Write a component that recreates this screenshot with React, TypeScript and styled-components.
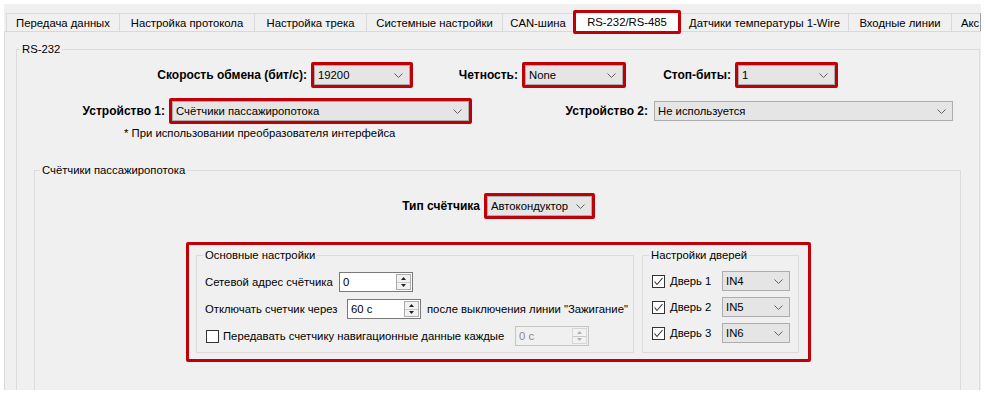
import React from "react";
import styled, { createGlobalStyle } from "styled-components";

const GlobalStyle = createGlobalStyle`
  html, body { margin: 0; padding: 0; background: #ffffff; }
  body { font-family: "Liberation Sans", Arial, sans-serif; font-size: 11.3px; color: #000; }
  * { box-sizing: border-box; }
`;

const RED = "#bf0008";
const FS = "11.3px";

const Page = styled.div`
  width: 987px;
  height: 394px;
  padding: 4px 6px 4px 4px;
  background: #fff;
`;

const Frame = styled.div`
  width: 977px;
  height: 386px;
  background: #f0f0f0;
  overflow: hidden;
  display: flex;
  flex-direction: column;
`;

const TabBar = styled.div`
  height: 27px;
  flex: none;
  display: flex;
  align-items: flex-end;
  padding-left: 2px;
  white-space: nowrap;
`;

const Tab = styled.div<{ $w: number }>`
  flex: none;
  width: ${(p) => p.$w}px;
  height: 18px;
  margin-left: -1px;
  border: 1px solid #d9d9d9;
  border-bottom: none;
  display: flex;
  align-items: center;
  justify-content: center;
  font-size: ${FS};
  overflow: hidden;
  &:first-child { margin-left: 0; }
`;

const ActiveTab = styled.div<{ $w: number }>`
  flex: none;
  position: relative;
  z-index: 1;
  width: ${(p) => p.$w}px;
  height: 24px;
  margin: 0 0 -3px -1px;
  border: 3px solid ${RED};
  border-radius: 2px;
  background: #fff;
  display: flex;
  align-items: center;
  justify-content: center;
  font-size: ${FS};
`;

const CutTab = styled(Tab)`
  justify-content: flex-start;
  padding-left: 9px;
  border-right-color: #a0a0a0;
`;

const Panel = styled.div`
  flex: 1;
  border-top: 1px solid #d9d9d9;
  border-left: 1px solid #d9d9d9;
  padding: 10px 0 0 11px;
`;

const Group = styled.fieldset<{ $w: number }>`
  margin: 0;
  padding: 0;
  min-width: 0;
  width: ${(p) => p.$w}px;
  border: 1px solid #dcdcdc;
`;

const OuterGroup = styled(Group)`
  height: 420px;
`;

const InnerGroup = styled(Group)`
  margin: 23px 0 0 17px;
  height: 300px;
`;

const SubGroup = styled(Group)`
  padding: 0 8px 6px 8px;
`;

const Legend = styled.legend<{ $ml: number }>`
  padding: 0 2px;
  margin-left: ${(p) => p.$ml}px;
  line-height: 14px;
  font-size: ${FS};
`;

const Row = styled.div<{ $mt?: number; $pl?: number }>`
  display: flex;
  align-items: center;
  margin-top: ${(p) => p.$mt ?? 0}px;
  padding-left: ${(p) => p.$pl ?? 0}px;
  white-space: nowrap;
`;

const FieldLabel = styled.div<{ $w: number; $pr?: number }>`
  flex: none;
  width: ${(p) => p.$w}px;
  padding-right: ${(p) => p.$pr ?? 4}px;
  text-align: right;
  font-weight: bold;
  font-size: 12px;
`;

const PlainLabel = styled.div<{ $w?: number; $ml?: number; $pl?: number }>`
  flex: none;
  ${(p) => (p.$w ? `width: ${p.$w}px;` : "")}
  margin-left: ${(p) => p.$ml ?? 0}px;
  padding-left: ${(p) => p.$pl ?? 0}px;
  font-size: ${FS};
  white-space: nowrap;
  overflow: hidden;
`;

const Note = styled.div`
  margin-top: 2px;
  padding-left: 107px;
  line-height: 14px;
  font-size: ${FS};
`;

const Highlight = styled.div`
  flex: none;
  display: flex;
  border: 3px solid ${RED};
  border-radius: 2px;
`;

const BigHighlight = styled(Highlight)`
  margin: 23px 0 0 151px;
  width: 625px;
  padding: 3px 9px 6px 7px;
  gap: 8px;
  align-items: stretch;
`;

const ComboBox = styled.div<{ $w: number }>`
  flex: none;
  width: ${(p) => p.$w}px;
  height: 20px;
  background: #e5e5e5;
  border: 1px solid #adadad;
  display: flex;
  align-items: center;
  justify-content: space-between;
  padding: 0 6px 0 3px;
  font-size: ${FS};
`;

const Spin = styled.div<{ $disabled?: boolean }>`
  flex: none;
  width: 74px;
  height: 20px;
  display: flex;
  align-items: stretch;
  background: ${(p) => (p.$disabled ? "#f0f0f0" : "#fff")};
  border: 1px solid ${(p) => (p.$disabled ? "#c4c4c4" : "#7a7a7a")};
  color: ${(p) => (p.$disabled ? "#8a8a8a" : "#000")};
  font-size: ${FS};
`;

const SpinValue = styled.div`
  flex: 1;
  display: flex;
  align-items: center;
  padding-left: 3px;
`;

const SpinButtons = styled.div<{ $disabled?: boolean }>`
  width: 15px;
  margin: 1px;
  display: flex;
  flex-direction: column;
  border: 1px solid ${(p) => (p.$disabled ? "#d6d6d6" : "#acacac")};
  background: #f2f2f2;
`;

const SpinHalf = styled.div`
  flex: 1;
  display: flex;
  align-items: center;
  justify-content: center;
  & + & { border-top: 1px solid #c8c8c8; }
`;

const Check = styled.div`
  flex: none;
  width: 13px;
  height: 13px;
  border: 1px solid #333;
  background: #fff;
  display: flex;
  align-items: center;
  justify-content: center;
`;

const MainRows = styled.div`
  display: flex;
  flex-direction: column;
  gap: 7px;
  margin-top: 10px;
`;

const DoorRows = styled.div`
  display: flex;
  flex-direction: column;
  gap: 6px;
  margin-top: 9px;
`;

const Chevron = () => (
  <svg width="9" height="5" viewBox="0 0 9 5">
    <polyline points="0.5,0.5 4.5,4.5 8.5,0.5" fill="none" stroke="#606060" strokeWidth="1" />
  </svg>
);

const Combo: React.FC<{ w: number; value: string }> = ({ w, value }) => (
  <ComboBox $w={w}>
    <span>{value}</span>
    <Chevron />
  </ComboBox>
);

const Arrow: React.FC<{ up?: boolean; color: string }> = ({ up, color }) => (
  <svg width="5" height="3" viewBox="0 0 5 3">
    <polygon points={up ? "0,3 5,3 2.5,0" : "0,0 5,0 2.5,3"} fill={color} />
  </svg>
);

const SpinBox: React.FC<{ value: string; disabled?: boolean }> = ({ value, disabled }) => (
  <Spin $disabled={disabled}>
    <SpinValue>{value}</SpinValue>
    <SpinButtons $disabled={disabled}>
      <SpinHalf>
        <Arrow up color={disabled ? "#b0b0b0" : "#222"} />
      </SpinHalf>
      <SpinHalf>
        <Arrow color={disabled ? "#b0b0b0" : "#222"} />
      </SpinHalf>
    </SpinButtons>
  </Spin>
);

const CheckBox: React.FC<{ checked?: boolean }> = ({ checked }) => (
  <Check>
    {checked && (
      <svg width="11" height="11" viewBox="0 0 11 11">
        <polyline points="1.5,5.5 4,8.5 9.5,2" fill="none" stroke="#333" strokeWidth="1.1" />
      </svg>
    )}
  </Check>
);

const tabs: { label: string; w: number; active?: boolean }[] = [
  { label: "Передача данных", w: 114 },
  { label: "Настройка протокола", w: 136 },
  { label: "Настройка трека", w: 113 },
  { label: "Системные настройки", w: 137 },
  { label: "CAN-шина", w: 72 },
  { label: "RS-232/RS-485", w: 108, active: true },
  { label: "Датчики температуры 1-Wire", w: 169 },
  { label: "Входные линии", w: 104 },
];

const doors = [
  { name: "Дверь 1", input: "IN4" },
  { name: "Дверь 2", input: "IN5" },
  { name: "Дверь 3", input: "IN6" },
];

export default function App() {
  return (
    <>
      <GlobalStyle />
      <Page>
        <Frame>
          <TabBar>
            {tabs.map((t) =>
              t.active ? (
                <ActiveTab key={t.label} $w={t.w}>{t.label}</ActiveTab>
              ) : (
                <Tab key={t.label} $w={t.w}>{t.label}</Tab>
              )
            )}
            <CutTab $w={30}>Акс</CutTab>
          </TabBar>
          <Panel>
            <OuterGroup $w={964}>
              <Legend $ml={3}>RS-232</Legend>
              <Row $mt={6}>
                <FieldLabel $w={294}>Скорость обмена (бит/с):</FieldLabel>
                <Highlight><Combo w={96} value="19200" /></Highlight>
                <FieldLabel $w={109}>Четность:</FieldLabel>
                <Highlight><Combo w={98} value="None" /></Highlight>
                <FieldLabel $w={109}>Стоп-биты:</FieldLabel>
                <Highlight><Combo w={97} value="1" /></Highlight>
              </Row>
              <Row $mt={10}>
                <FieldLabel $w={152}>Устройство 1:</FieldLabel>
                <Highlight><Combo w={297} value="Счётчики пассажиропотока" /></Highlight>
                <FieldLabel $w={182} $pr={6}>Устройство 2:</FieldLabel>
                <Combo w={299} value="Не используется" />
              </Row>
              <Note>* При использовании преобразователя интерфейса</Note>
              <InnerGroup $w={927}>
                <Legend $ml={5}>Счётчики пассажиропотока</Legend>
                <Row $mt={16}>
                  <FieldLabel $w={449}>Тип счётчика</FieldLabel>
                  <Highlight><Combo w={105} value="Автокондуктор" /></Highlight>
                </Row>
                <BigHighlight>
                  <SubGroup $w={438}>
                    <Legend $ml={-2}>Основные настройки</Legend>
                    <MainRows>
                      <Row>
                        <PlainLabel $w={134}>Сетевой адрес счётчика</PlainLabel>
                        <SpinBox value="0" />
                      </Row>
                      <Row>
                        <PlainLabel $w={142}>Отключать счетчик через</PlainLabel>
                        <SpinBox value="60 с" />
                        <PlainLabel $ml={6}>после выключения линии "Зажигание"</PlainLabel>
                      </Row>
                      <Row $pl={1}>
                        <CheckBox />
                        <PlainLabel $w={296} $pl={4}>
                          Передавать счетчику навигационные данные каждые
                        </PlainLabel>
                        <SpinBox value="0 с" disabled />
                      </Row>
                    </MainRows>
                  </SubGroup>
                  <SubGroup $w={157}>
                    <Legend $ml={-2}>Настройки дверей</Legend>
                    <DoorRows>
                      {doors.map((d) => (
                        <Row key={d.name} $pl={1}>
                          <CheckBox checked />
                          <PlainLabel $w={57} $pl={5}>{d.name}</PlainLabel>
                          <Combo w={68} value={d.input} />
                        </Row>
                      ))}
                    </DoorRows>
                  </SubGroup>
                </BigHighlight>
              </InnerGroup>
            </OuterGroup>
          </Panel>
        </Frame>
      </Page>
    </>
  );
}
